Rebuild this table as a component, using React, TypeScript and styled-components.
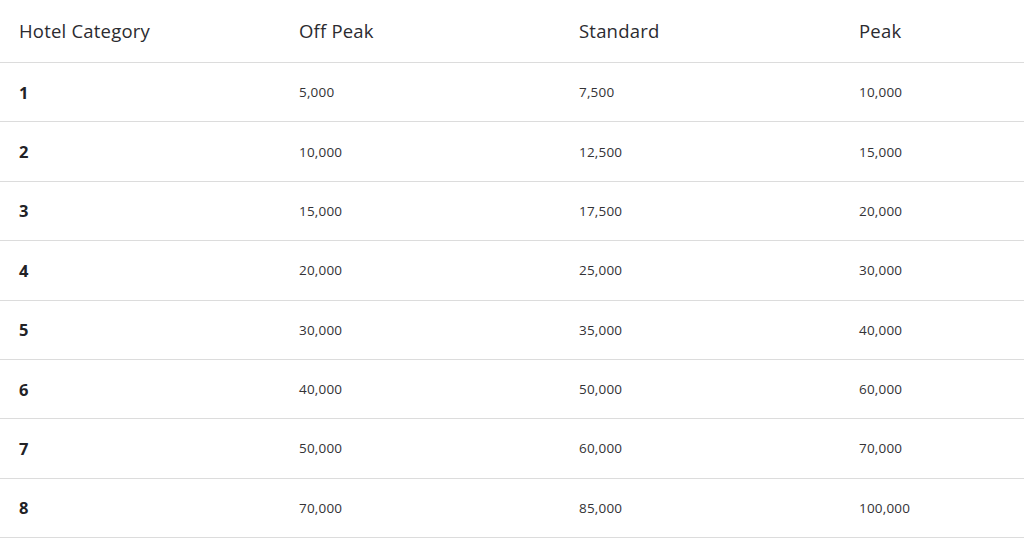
import React from "react";
import styled, { createGlobalStyle } from "styled-components";

const Global = createGlobalStyle`
  html, body { margin: 0; padding: 0; background: #ffffff; }
  body { font-family: "Open Sans", "Liberation Sans", sans-serif; color: #2c2c30; }
`;

const Table = styled.div`
  width: 1024px;
  display: grid;
  grid-template-columns: 280px 280px 280px 1fr;
`;

const HeaderCell = styled.div`
  height: 60px;
  padding-bottom: 2px;
  border-bottom: 1px solid #dcdcdc;
  padding-left: 19px;
  display: flex;
  align-items: center;
  font-size: 18.5px;
  font-weight: 500;
  letter-spacing: 0.2px;
  color: #2b2b30;
`;

const Cell = styled.div<{ $bold?: boolean }>`
  height: 58.375px;
  border-bottom: 1px solid #dcdcdc;
  padding-left: 19px;
  display: flex;
  align-items: center;
  font-size: ${(p) => (p.$bold ? "16.5px" : "13.5px")};
  font-weight: ${(p) => (p.$bold ? 700 : 400)};
  letter-spacing: ${(p) => (p.$bold ? "0" : "0.2px")};
  color: ${(p) => (p.$bold ? "#222226" : "#333336")};
`;

const headers = ["Hotel Category", "Off Peak", "Standard", "Peak"];
const rows: [string, string, string, string][] = [
  ["1", "5,000", "7,500", "10,000"],
  ["2", "10,000", "12,500", "15,000"],
  ["3", "15,000", "17,500", "20,000"],
  ["4", "20,000", "25,000", "30,000"],
  ["5", "30,000", "35,000", "40,000"],
  ["6", "40,000", "50,000", "60,000"],
  ["7", "50,000", "60,000", "70,000"],
  ["8", "70,000", "85,000", "100,000"],
];

export default function App() {
  return (
    <>
      <Global />
      <Table>
        {headers.map((h) => (
          <HeaderCell key={h}>{h}</HeaderCell>
        ))}
        {rows.map((r) =>
          r.map((v, i) => (
            <Cell key={r[0] + "-" + i} $bold={i === 0}>
              {v}
            </Cell>
          ))
        )}
      </Table>
    </>
  );
}
